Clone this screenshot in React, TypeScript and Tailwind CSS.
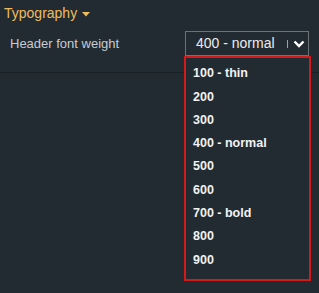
import { useState } from 'react'

const weights = [
  '100 - thin',
  '200',
  '300',
  '400 - normal',
  '500',
  '600',
  '700 - bold',
  '800',
  '900',
]

export default function App() {
  const [value] = useState('400 - normal')

  return (
    <div className="w-[319px] h-[293px] bg-[#232b32] overflow-hidden font-['Liberation_Sans',Arial,sans-serif]">
      {/* Section header */}
      <div className="flex items-center h-[26px] pl-[4px] pt-[1px]">
        <span className="text-[14px] text-[#eebc5f]">Typography</span>
        <svg className="ml-[5px] mt-[1px]" width="8" height="5" viewBox="0 0 8 5">
          <path d="M0 0 L8 0 L4 4.5 Z" fill="#eebc5f" />
        </svg>
      </div>

      {/* Row */}
      <div className="flex items-start justify-between pt-[5px] pb-[16px] pl-[10px] pr-[10px] border-b border-[#1a2228]">
        <span className="text-[13px] text-[#c6ccd1] leading-[25px]">Header font weight</span>
        <div className="relative">
          <div className="flex items-center w-[124px] h-[25px] border border-[#6b7378] pl-[10px] pr-[3px]">
            <span className="flex-1 text-[14px] text-[#ececec]">{value}</span>
            <span className="w-px h-[8px] bg-[#9aa0a4] mr-[5px]" />
            <svg width="12" height="8" viewBox="0 0 12 8">
              <path d="M1.5 1.5 L6 6 L10.5 1.5" stroke="#ffffff" strokeWidth="2.4" fill="none" />
            </svg>
          </div>
          {/* Open list */}
          <div className="absolute left-[-1px] top-[25px] w-[127px] border-2 border-[#d11a1a] bg-[#232b32] pt-[4px] pb-[7px] flex flex-col z-10">
            {weights.map((w) => (
              <div key={w} className="h-[23.3px] flex items-center pl-[7px] text-[12.5px] font-semibold text-[#f2f2f2]">
                {w}
              </div>
            ))}
          </div>
        </div>
      </div>
    </div>
  )
}
